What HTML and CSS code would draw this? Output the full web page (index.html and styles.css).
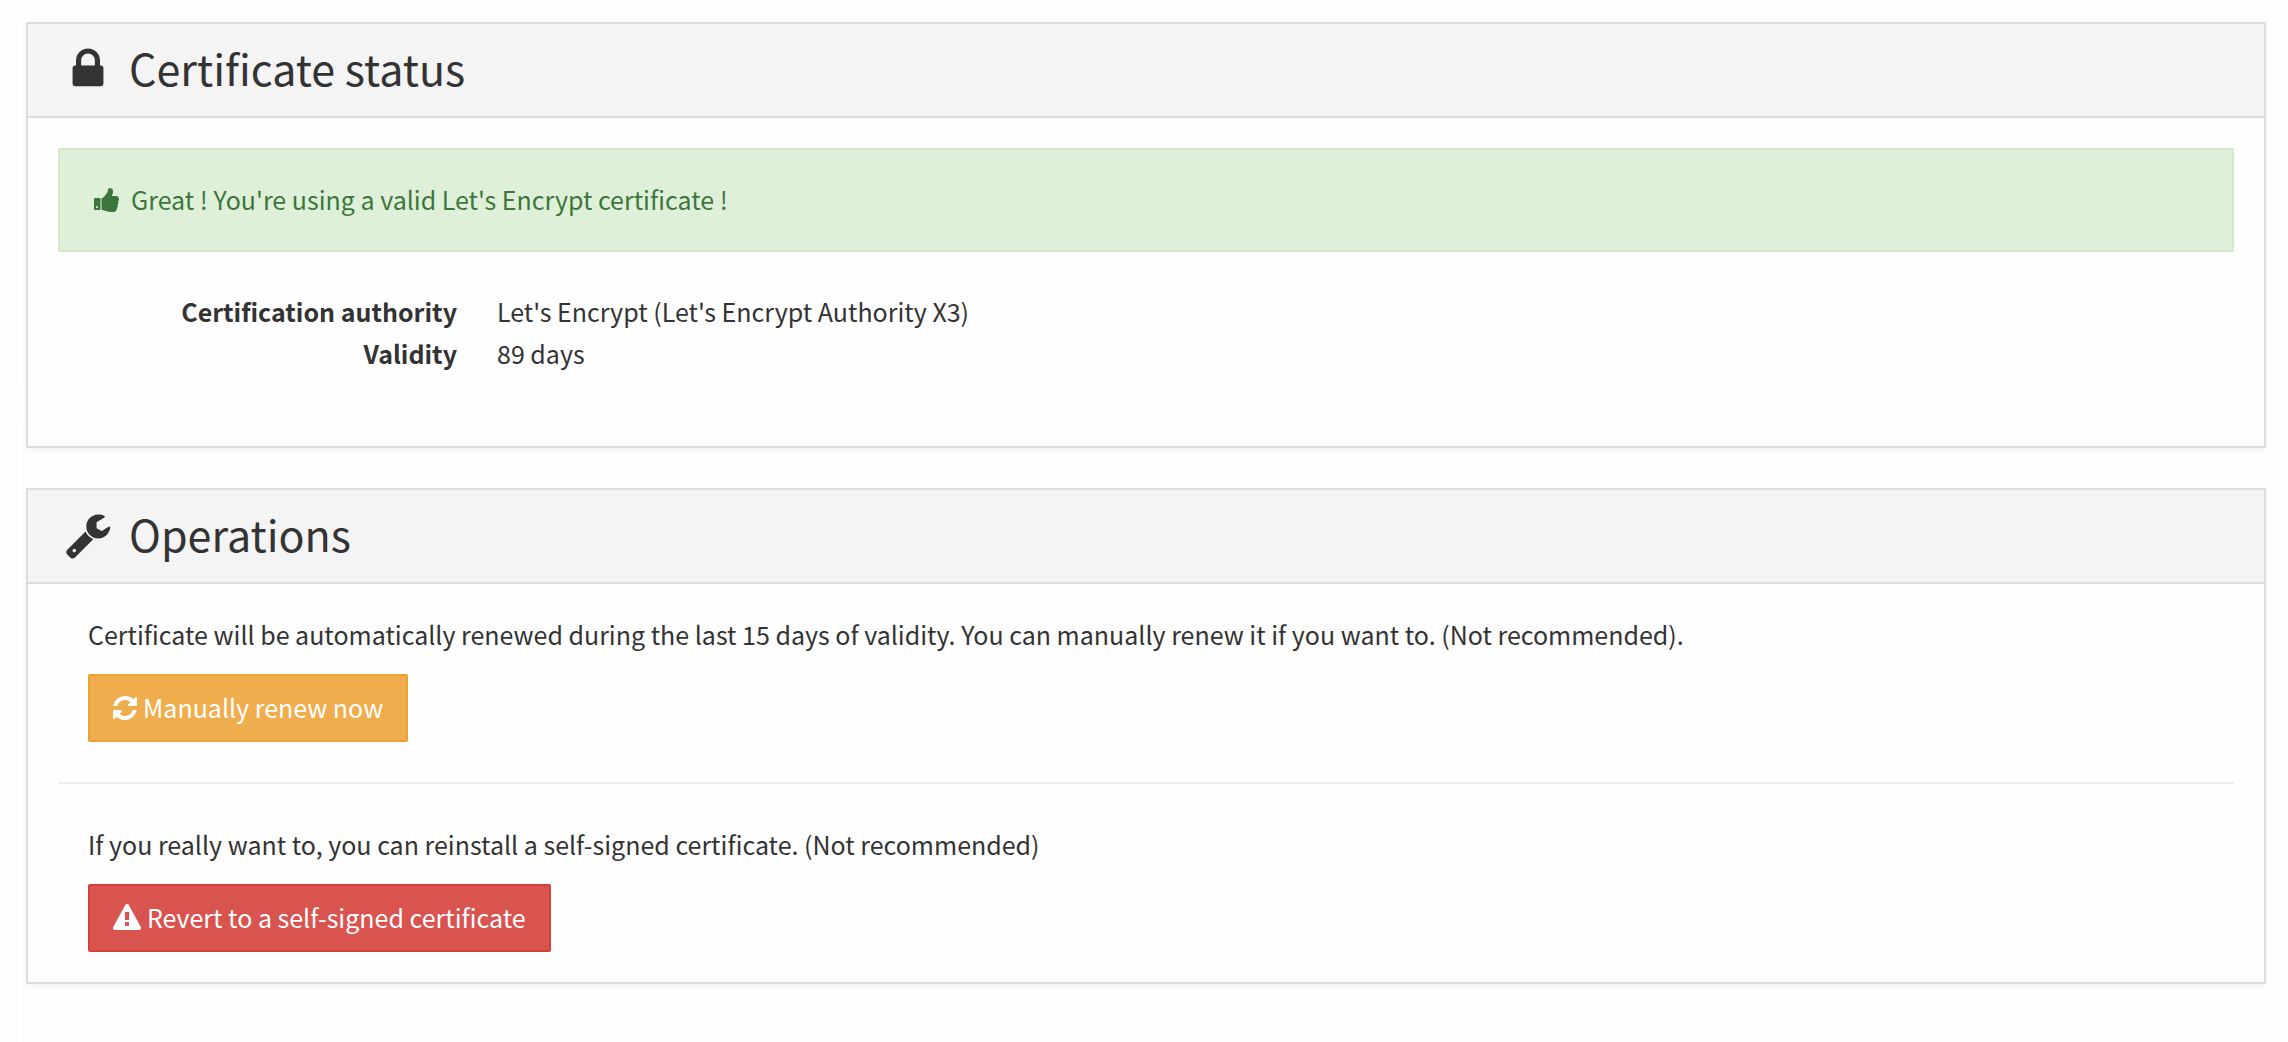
FILE: index.html
```html
<!DOCTYPE html>
<html lang="en">
<head>
<meta charset="utf-8">
<title>Certificate status</title>
<link rel="stylesheet" href="styles.css">
</head>
<body>
<main class="content">
  <section class="panel">
    <header class="panel-heading">
      <svg class="icon icon-title" viewBox="0 0 1792 1792" aria-hidden="true"><path d="M640 768h512v-192q0-106-75-181t-181-75-181 75-75 181v192zm832 96v576q0 40-28 68t-68 28h-960q-40 0-68-28t-28-68v-576q0-40 28-68t68-28h32v-192q0-184 132-316t316-132 316 132 132 316v192h32q40 0 68 28t28 68z"/></svg>
      <h2 class="panel-title">Certificate status</h2>
    </header>
    <div class="panel-body">
      <div class="alert" role="status">
        <svg class="icon" viewBox="0 0 1792 1792" aria-hidden="true"><path d="M320 1344q0-26-19-45t-45-19q-27 0-45.5 19t-18.5 45q0 27 18.5 45.5t45.5 18.5q26 0 45-18.5t19-45.5zm160-512v640q0 26-19 45t-45 19h-288q-26 0-45-19t-19-45v-640q0-26 19-45t45-19h288q26 0 45 19t19 45zm1184 0q0 86-55 149 15 44 15 76 3 76-43 137 17 56 0 117-15 57-54 94 9 112-49 181-64 76-197 78h-129q-66 0-144-15.5t-121.5-29-120.5-39.5q-123-43-158-44-26-1-45-19.5t-19-44.5v-641q0-25 18-43.5t43-20.5q24-2 76-59t101-121q68-87 101-120 18-18 31-48t17.5-48.5 13.5-60.5q7-39 12.5-61t19.5-52 34-50q19-19 45-19 46 0 82.5 10.5t60 26 40 40.5 24 45 12 50 5 45 .5 39q0 38-9.5 76t-19 60-27.5 56q-3 6-10 18t-11 22-8 24h277q78 0 135 57t57 135z"/></svg>
        <span class="label">Great ! You're using a valid Let's Encrypt certificate !</span>
      </div>
      <dl class="details">
        <dt>Certification authority</dt>
        <dd>Let's Encrypt (Let's Encrypt Authority X3)</dd>
        <dt>Validity</dt>
        <dd>89 days</dd>
      </dl>
    </div>
  </section>

  <section class="panel">
    <header class="panel-heading">
      <svg class="icon icon-title" viewBox="0 0 1792 1792" aria-hidden="true"><path d="M448 1472q0-26-19-45t-45-19-45 19-19 45 19 45 45 19 45-19 19-45zm644-420l-682 682q-37 37-90 37-52 0-91-37l-106-108q-38-36-38-90 0-53 38-91l681-681q39 98 114.500 173.500t173.500 114.500zm634-435q0 39-23 106-47 134-164.500 217.500t-258.500 83.500q-185 0-316.500-131.500t-131.500-316.500 131.500-316.500 316.500-131.500q58 0 121.500 16.500t107.500 46.500q16 11 16 28t-16 28l-293 169v224l193 107q5-3 79-48.500t135.500-81 70.500-35.500q15 0 23.500 10t8.500 25z"/></svg>
      <h2 class="panel-title">Operations</h2>
    </header>
    <div class="panel-body">
      <div class="operation">
        <p>Certificate will be automatically renewed during the last 15 days of validity. You can manually renew it if you want to. (Not recommended).</p>
        <button type="button" class="btn btn-warning">
          <svg class="icon" viewBox="0 0 1536 1792" aria-hidden="true"><path transform="translate(-128 0)" d="M1639 1056q0 5-1 7-64 268-268 434.500t-478 166.500q-146 0-282.500-55t-243.500-157l-129 129q-19 19-45 19t-45-19-19-45v-448q0-26 19-45t45-19h448q26 0 45 19t19 45-19 45l-137 137q71 66 161 102t187 36q134 0 250-65t186-179q11-17 53-117 8-23 30-23h192q13 0 22.500 9.500t9.500 22.500zm25-800v448q0 26-19 45t-45 19h-448q-26 0-45-19t-19-45 19-45l138-138q-148-137-349-137-134 0-250 65t-186 179q-11 17-53 117-8 23-30 23h-199q-13 0-22.500-9.500t-9.500-22.500v-7q65-268 270-434.500t480-166.500q146 0 284 55.500t245 156.500l130-129q19-19 45-19t45 19 19 45z"/></svg>
          <span class="label">Manually renew now</span>
        </button>
      </div>
      <hr class="divider">
      <div class="operation">
        <p>If you really want to, you can reinstall a self-signed certificate. (Not recommended)</p>
        <button type="button" class="btn btn-danger">
          <svg class="icon" viewBox="0 0 1792 1792" aria-hidden="true"><path d="M1024 1375v-190q0-14-9.500-23.500t-22.500-9.500h-192q-13 0-22.500 9.500t-9.500 23.500v190q0 14 9.500 23.500t22.500 9.500h192q13 0 22.500-9.500t9.500-23.500zm-2-374l18-459q0-12-10-19-13-11-24-11h-220q-11 0-24 11-10 7-10 21l17 457q0 10 10 16.500t24 6.500h185q14 0 23.500-6.500t10.500-16.500zm-14-934l768 1408q35 63-2 126-17 29-46.500 46t-63.500 17h-1536q-34 0-63.500-17t-46.500-46q-37-63-2-126l768-1408q17-31 47-49t65-18 65 18 47 49z"/></svg>
          <span class="label">Revert to a self-signed certificate</span>
        </button>
      </div>
    </div>
  </section>
</main>
</body>
</html>
```
FILE: styles.css
```css
* {
  box-sizing: border-box;
}

body {
  margin: 0;
  background: #fefefe;
  color: #333;
  font: 25px/42px "Noto Sans CJK SC", "Open Sans", sans-serif;
}

/* The faint rule in the left gutter is broken between the two panels. */
.content {
  display: flex;
  flex-direction: column;
  gap: 40px;
  min-height: 100vh;
  padding: 22px 22px 58px 26px;
  background: linear-gradient(transparent 22px, #f9f9f9 26px 382px, transparent 388px 422px, #f9f9f9 428px) 16px 0 / 1px 100% no-repeat;
}

.panel {
  background: #fefefe;
  border: 2px solid #ddd;
  box-shadow: 0 2px 4px rgba(0, 0, 0, 0.05);
}

.panel-heading {
  display: flex;
  align-items: center;
  gap: 17px;
  height: 94px;
  padding: 0 36px 2px;
  background: #f4f4f4;
  border-bottom: 2px solid #ddd;
}

.panel-title {
  margin: 0;
  padding-bottom: 4px;
  font-size: 43px;
  font-weight: 400;
  line-height: 64px;
}

.icon {
  flex: none;
  height: 28px;
  fill: currentColor;
}

.icon-title {
  height: 48px;
}

.label {
  padding-bottom: 2px;
  line-height: 40px;
}

.panel-body {
  padding: 30px;
}

.alert {
  display: flex;
  align-items: center;
  gap: 10px;
  padding: 29px 33px;
  background: #dff0d8;
  border: 2px solid #d6e9c6;
  color: #3c763d;
}

.details {
  display: grid;
  grid-template-columns: 399px 1fr;
  column-gap: 40px;
  margin: 38px 0 42px;
}

.details dt {
  font-weight: 700;
  text-align: right;
}

.details dd {
  margin: 0;
}

.operation {
  padding: 0 30px;
}

.operation p {
  margin: 0 0 20px;
  line-height: 40px;
}

.btn {
  display: flex;
  align-items: center;
  gap: 6px;
  height: 68px;
  padding: 0 23px;
  border: 2px solid;
  border-radius: 2px;
  color: #fff;
  font: inherit;
}

.btn-warning {
  background: #f0ad4e;
  border-color: #eea236;
}

.btn-danger {
  background: #d9534f;
  border-color: #d43f3a;
}

.divider {
  height: 2px;
  margin: 40px 0;
  border: 0;
  background: #eee;
}
```
